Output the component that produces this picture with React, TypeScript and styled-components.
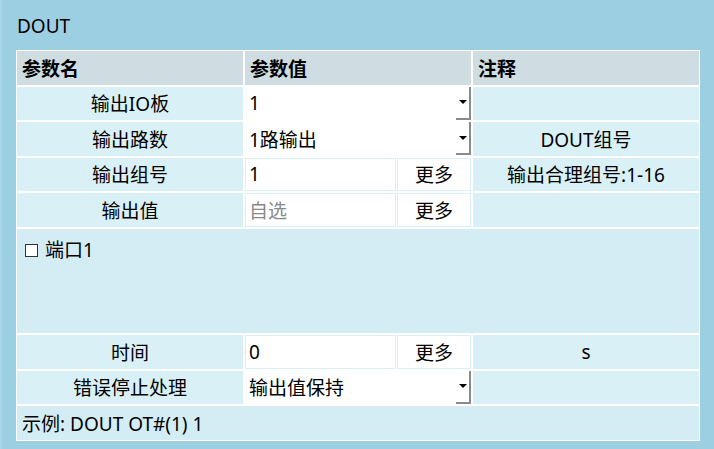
import { createGlobalStyle } from "styled-components";
import styled from "styled-components";

const GlobalStyle = createGlobalStyle`
  html, body {
    margin: 0;
    padding: 0;
    background: #9dcfe2;
  }
  body {
    font-family: "Noto Sans", "Noto Sans CJK SC", sans-serif;
    color: #000;
  }
`;

const Page = styled.div`
  width: 714px;
  height: 449px;
  box-sizing: border-box;
  background: #9dcfe2;
  border-left: 2px solid #a9d7e8;
  padding: 0 14px 0 14px;
`;

const Title = styled.div`
  height: 50px;
  display: flex;
  align-items: center;
  padding: 2px 0 0 1px;
  box-sizing: border-box;
  font-size: 19px;
`;

const Grid = styled.div`
  width: 684px;
  box-sizing: border-box;
  display: grid;
  grid-template-columns: repeat(3, 226px);
  grid-template-rows: repeat(5, 33.5px) 104.5px repeat(3, 33.5px);
  gap: 2px;
  padding: 1px;
  background: #fff;
  font-size: 19px;
`;

const HeadCell = styled.div`
  background: #cfdde3;
  font-weight: bold;
  display: flex;
  align-items: center;
  padding-left: 5px;
`;

const Cell = styled.div<{ $align?: "left" | "center" }>`
  background: #d9f0f6;
  display: flex;
  align-items: center;
  justify-content: ${(p) => (p.$align === "left" ? "flex-start" : "center")};
  padding-left: ${(p) => (p.$align === "left" ? "5px" : "0")};
  white-space: nowrap;
`;

const WideCell = styled.div<{ $tall?: boolean }>`
  grid-column: 1 / span 3;
  background: #d4edf5;
  display: flex;
  align-items: ${(p) => (p.$tall ? "flex-start" : "center")};
  padding: ${(p) => (p.$tall ? "8px 0 0 8px" : "0 0 0 5px")};
  gap: 7px;
`;

const ValueCell = styled.div`
  background: #fff;
  display: flex;
`;

const Select = styled.div`
  flex: 1;
  display: flex;
  align-items: center;
  padding-left: 4px;
`;

const SelectButton = styled.div`
  width: 15px;
  height: 33px;
  box-sizing: border-box;
  border-right: 2px solid #8a8a8a;
  border-bottom: 2px solid #8a8a8a;
  display: flex;
  align-items: center;
  justify-content: center;

  &::after {
    content: "";
    border-left: 4px solid transparent;
    border-right: 4px solid transparent;
    border-top: 4px solid #000;
  }
`;

const InputBox = styled.div<{ $placeholder?: boolean }>`
  flex: 1;
  box-sizing: border-box;
  border: 1px solid #d9f0f6;
  display: flex;
  align-items: center;
  padding-left: 3px;
  color: ${(p) => (p.$placeholder ? "#8a8a8a" : "#000")};
`;

const MoreButton = styled.div`
  width: 74px;
  margin-left: 1px;
  box-sizing: border-box;
  border: 1px solid #d9f0f6;
  display: flex;
  align-items: center;
  justify-content: center;
`;

const Check = styled.span`
  width: 13px;
  height: 13px;
  box-sizing: border-box;
  border: 1px solid #333;
  background: #fff;
  margin-top: 7px;
`;

const CheckLabel = styled.span`
  line-height: 26px;
`;

function SelectValue({ value }: { value: string }) {
  return (
    <ValueCell>
      <Select>{value}</Select>
      <SelectButton />
    </ValueCell>
  );
}

function InputValue({ value, placeholder }: { value?: string; placeholder?: string }) {
  return (
    <ValueCell>
      <InputBox $placeholder={!value}>{value || placeholder}</InputBox>
      <MoreButton>更多</MoreButton>
    </ValueCell>
  );
}

export default function App() {
  return (
    <>
      <GlobalStyle />
      <Page>
        <Title>DOUT</Title>
        <Grid>
          <HeadCell>参数名</HeadCell>
          <HeadCell>参数值</HeadCell>
          <HeadCell>注释</HeadCell>

          <Cell>输出IO板</Cell>
          <SelectValue value="1" />
          <Cell />

          <Cell>输出路数</Cell>
          <SelectValue value="1路输出" />
          <Cell>DOUT组号</Cell>

          <Cell>输出组号</Cell>
          <InputValue value="1" />
          <Cell>输出合理组号:1-16</Cell>

          <Cell>输出值</Cell>
          <InputValue placeholder="自选" />
          <Cell />

          <WideCell $tall>
            <Check />
            <CheckLabel>端口1</CheckLabel>
          </WideCell>

          <Cell>时间</Cell>
          <InputValue value="0" />
          <Cell>s</Cell>

          <Cell>错误停止处理</Cell>
          <SelectValue value="输出值保持" />
          <Cell />

          <WideCell>示例: DOUT OT#(1) 1</WideCell>
        </Grid>
      </Page>
    </>
  );
}
